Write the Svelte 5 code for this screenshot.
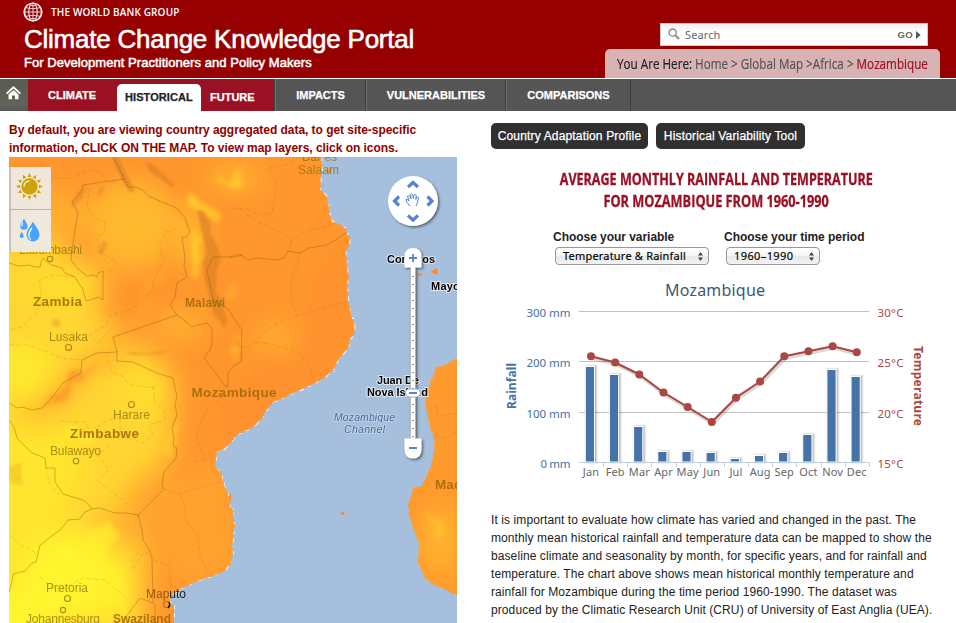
<script>
  const months = ['Jan', 'Feb', 'Mar', 'Apr', 'May', 'Jun', 'Jul', 'Aug', 'Sep', 'Oct', 'Nov', 'Dec'];
  const barTops = [367, 375, 427, 452, 452, 453, 459, 456, 453, 435, 370, 377];
  const temps = [356.3, 362.5, 374.5, 392.5, 407, 422, 397.7, 381.5, 356.3, 351.2, 346.3, 352.3];
  const step = 24.16;
  const points = temps.map((y, i) => [591 + i * step, y]);
  const line = points.map((p) => p.join(',')).join(' ');
  const grid = [
    { y: 311.5, mm: '300 mm', c: '30°C' },
    { y: 361.5, mm: '200 mm', c: '25°C' },
    { y: 412.5, mm: '100 mm', c: '20°C' },
    { y: 462.5, mm: '0 mm', c: '15°C' }
  ];
  const rays = Array.from({ length: 12 }, (_, i) => i * 30);
  const ticks = Array.from({ length: 22 }, (_, i) => 276.5 + i * 8);

  const coast =
    'L322,165 321,175 320,190 323,192 327,197 329,208 331,220 338,224 345,228 347,234 350,237 349,246 346,250 347,270 349,277 347,283 348,300 350,313 354,323 355,332 350,340 348,348 338,360 333,370 324,378 315,383 310,386 297,391 283,398 273,402 265,412 263,417 255,425 252,428 242,432 236,436 230,443 224,449 217,452 215,467 221,473 224,485 228,495 230,508 233,510 234,528 232,548 233,552 231,563 223,572 200,580 182,588 174,594 170,598 170,605 174,605 174,630';
  const africa = `M0,150 H320 ${coast} H0 Z`;
  const shore = `M320,150 ${coast}`;
  const madagascar =
    'M465,355 L457,358 448,363 443,366 435,367 433,377 428,388 425,392 426,408 430,428 434,438 435,445 432,463 427,475 422,485 414,488 408,505 412,525 417,538 419,543 418,563 425,578 433,585 443,588 453,594 465,594 Z';

  const borders = [
    '124,179 83,185 81,192 72,202 78,213 76,224 74,237 72,248 71,260 78,269 87,276 93,275 97,277 98,273 103,271 103,300 99,297 90,300 86,301 82,287 79,284 75,277 65,273 62,268 52,265 47,262 43,258 41,262 40,267 35,267 29,265 19,266 9,263',
    '113,157 118,166 128,187 135,187 143,190 148,196 153,198 162,202 177,208 185,218 190,232 186,237 182,237 183,245 185,257 184,266 187,277 177,283 175,297 170,305 177,315 184,320 192,327 198,325 207,323 212,328 212,343 210,350 204,358 214,371 226,387 228,383',
    '177,315 113,337 117,352 97,353 82,360 81,373 63,383 54,395 42,408 32,410 22,407 17,408 9,403',
    '117,352 117,361 133,362 150,370 157,373 173,378 175,388 177,396 175,405 177,415 172,428 174,438 173,446 177,448 176,458 164,472 162,485 164,489 138,515 125,513 115,513 100,508 92,509 86,502 83,500 63,494 55,482 55,468 46,468 45,458 32,453 17,438 14,427 9,420',
    '92,509 85,512 80,519 68,520 60,530 53,535 40,545 36,562 32,563 25,571 13,574 12,582 9,592',
    '138,515 142,530 143,540 150,551 152,558 153,603 140,598 125,618 122,623',
    '153,603 155,605 155,623',
    '230,257 240,254 248,260 257,258 277,260 284,258 288,251 300,253 309,248 327,245 337,239 347,232',
    '242,255 234,257 213,257 207,270 210,285 213,300 227,308 242,330 241,362 234,365 228,373 228,387'
  ];
  const provinces = [
    '40,163 55,178 72,178 90,170 101,172 105,180 118,184',
    '90,187 87,205 92,215 105,222 104,233 97,237 100,252 117,262 108,274',
    '177,229 165,232 160,245 161,255 166,258 156,275 152,290 140,302 130,310 110,315 106,325 90,335 98,343 109,331',
    '75,277 52,275 39,280 42,300 36,313 22,327 9,330',
    '9,345 28,345 48,352 60,358 82,360',
    '108,353 108,363 112,372 122,376 130,385 155,388',
    '232,208 248,209 257,215 272,213 275,196 276,180 268,168 288,164 299,157',
    '240,210 258,222 272,228 290,238 290,252',
    '290,242 307,231 320,228 337,223',
    '300,253 297,267 291,280 291,300 298,316 335,304 346,302',
    '298,316 280,322 267,330 256,342 247,348 240,346',
    '256,342 275,345 298,352 309,365 314,382',
    '228,388 219,388 219,400 207,410 198,430 197,440 206,460 192,462',
    '164,489 177,494 200,488 222,482',
    '180,495 186,507 184,517 198,537 200,555 208,575',
    '153,385 155,402 164,410 165,420 149,425 153,435 143,443 129,438 120,428 120,417 103,422 98,427',
    '110,445 98,455 109,470 98,481 112,492 125,502 138,515',
    '60,421 85,422 92,435',
    '46,468 50,485 60,495',
    '138,552 132,562 133,570 140,556 151,551',
    '153,560 170,566 170,585 180,590',
    '9,535 20,545 32,550 38,555',
    '40,577 58,592 83,578 105,580 125,597',
    '436,405 438,416 450,414 457,413',
    '432,436 445,438 457,432'
  ];
</script>

<div class="page">
  <header>
    <div class="brand">
      <div class="group">
        <svg width="20" height="20" viewBox="0 0 20 20" fill="none" stroke="#fff" stroke-width="1">
          <circle cx="10" cy="10" r="9" stroke-width="1.2" />
          <ellipse cx="10" cy="10" rx="4.2" ry="9" />
          <path d="M10 1V19M1 10H19M2.3 5.6Q10 8 17.7 5.6M2.3 14.4Q10 12 17.7 14.4M5.2 2.7Q10 4.7 14.8 2.7M5.2 17.3Q10 15.3 14.8 17.3M5 2.6Q-1.6 10 5 17.4M15 2.6Q21.6 10 15 17.4" stroke-width=".8" />
        </svg>
        <span>THE WORLD BANK GROUP</span>
      </div>
      <h1>Climate Change Knowledge Portal</h1>
      <p>For Development Practitioners and Policy Makers</p>
    </div>
    <div class="tools">
      <div class="search">
        <svg width="12" height="12" viewBox="0 0 12 12" fill="none" stroke="#888">
          <circle cx="4.6" cy="4.6" r="3.6" stroke-width="1.3" />
          <path d="M7.4 7.4L11 11" stroke-width="2" />
        </svg>
        <span class="ph">Search</span>
        <span class="go">GO</span>
        <svg width="5" height="8" viewBox="0 0 5 8"><path d="M0 0L4.6 4L0 8Z" fill="#555" /></svg>
      </div>
      <div class="crumbs"><span class="squeeze"><b>You Are Here:</b> Home &gt; Global Map &gt;Africa &gt; <em>Mozambique</em></span></div>
    </div>
  </header>

  <nav>
    <div class="home">
      <svg width="15" height="14" viewBox="0 0 15 14" fill="#fff">
        <path d="M7.5 0L15 7L13.8 8.2L7.5 2.4L1.2 8.2L0 7ZM7.5 3.9L12.5 8.5V13.2H9V9.5H6V13.2H2.5V8.5Z" />
      </svg>
    </div>
    <div class="climate">
      <span class="main">CLIMATE</span>
      <span class="active">HISTORICAL</span>
      <span class="future">FUTURE</span>
    </div>
    <span class="tab impacts">IMPACTS</span>
    <span class="tab vuln">VULNERABILITIES</span>
    <span class="tab comp">COMPARISONS</span>
  </nav>

  <main>
    <section class="left">
      <p class="notice">By default, you are viewing country aggregated data, to get site-specific<br />information, CLICK ON THE MAP. To view map layers, click on icons.</p>
      <svg class="map" width="448" height="466" viewBox="9 157 448 466">
        <defs>
          <clipPath id="land"><path d={africa} /><path d={madagascar} /></clipPath>
          <filter id="soft" x="-30%" y="-30%" width="160%" height="160%">
            <feGaussianBlur stdDeviation="13" />
          </filter>
          <filter id="mist" filterUnits="userSpaceOnUse" x="0" y="140" width="470" height="500">
            <feTurbulence type="fractalNoise" baseFrequency=".05" numOctaves="4" seed="8" result="n" />
            <feDisplacementMap in="SourceGraphic" in2="n" scale="22" xChannelSelector="R" yChannelSelector="G" />
            <feGaussianBlur stdDeviation="2.6" />
          </filter>
          <filter id="blot" x="-20%" y="-20%" width="140%" height="140%">
            <feGaussianBlur stdDeviation=".9" />
          </filter>
          <filter id="rough" filterUnits="userSpaceOnUse" x="0" y="140" width="480" height="500">
            <feTurbulence type="fractalNoise" baseFrequency=".25" numOctaves="2" seed="3" result="n" />
            <feDisplacementMap in="SourceGraphic" in2="n" scale="3" xChannelSelector="R" yChannelSelector="G" />
          </filter>
          <filter id="lift" x="-20%" y="-20%" width="150%" height="150%">
            <feDropShadow dx="1.5" dy="1.5" stdDeviation="1" flood-color="#333" flood-opacity=".65" />
          </filter>
        </defs>
        <rect x="9" y="157" width="448" height="466" fill="#a5bfdd" />
        <path d={shore} fill="none" stroke="#fff" stroke-width="1.8" stroke-dasharray="3 6 2 5 5 8" filter="url(#rough)" />
        <g filter="url(#rough)">
          <path d={africa} fill="#ff962d" />
          <path d={madagascar} fill="#ff9a2e" />
        </g>
        <g clip-path="url(#land)">
          <g filter="url(#soft)">
            <path d="M-20,235 L60,240 105,320 140,345 175,375 172,450 130,500 145,550 145,640 -20,640Z" fill="#ffd530" />
            <path d="M-20,410 L70,430 90,470 60,520 130,555 135,640 -20,640Z" fill="#ffe52e" />
            <ellipse cx="70" cy="575" rx="48" ry="38" fill="#fff52d" />
            <ellipse cx="20" cy="620" rx="35" ry="30" fill="#fff62d" />
            <ellipse cx="20" cy="370" rx="32" ry="28" fill="#ffea2d" />
            <ellipse cx="132" cy="225" rx="45" ry="45" fill="#ffb92e" />
            <ellipse cx="50" cy="215" rx="38" ry="26" fill="#ffae2f" />
            <ellipse cx="65" cy="285" rx="40" ry="25" fill="#ffdc2d" />
            <ellipse cx="145" cy="390" rx="20" ry="25" fill="#ffdf2d" />
            <ellipse cx="180" cy="325" rx="28" ry="14" fill="#ffb42e" />
            <ellipse cx="192" cy="238" rx="8" ry="35" fill="#ffcb2e" />
            <ellipse cx="235" cy="178" rx="32" ry="12" fill="#ffb42e" />
            <ellipse cx="278" cy="338" rx="24" ry="14" fill="#ffb02e" />
            <path d="M5,425 L35,408 95,350 130,335 125,355 85,375 60,405 40,420Z" fill="#ff9f2e" />
            <ellipse cx="150" cy="500" rx="24" ry="26" fill="#ffa42e" />
            <ellipse cx="118" cy="530" rx="18" ry="22" fill="#ffb22e" />
            <path d="M175,465 L230,470 240,570 180,590 155,560Z" fill="#ffa22e" />
            <ellipse cx="440" cy="540" rx="18" ry="34" fill="#ffb52e" />
            <path d="M350,220V340L300,390 250,430 230,460 225,400 300,340 330,260Z" fill="#ff912f" />
          </g>
          <g filter="url(#mist)" opacity=".65">
            <path d="M185,196L205,203 224,214 218,222 203,211 190,209Z" fill="#ffe02d" />
            <path d="M191,228L202,240 200,262 194,278 190,255Z" fill="#ffdf2d" />
            <path d="M246,175L238,186 222,184 214,180 226,178Z" fill="#ffd32d" />
            <path d="M40,412L55,393 72,377 100,362 78,382 57,406Z" fill="#f98e2c" />
            <path d="M116,340L140,305 160,260 178,225 165,275 145,325Z" fill="#ffa42e" />
            <path d="M230,348L238,335 242,338 238,358Z" fill="#ffc42d" />
            <path d="M83,535L106,525 118,535 108,560 130,585 118,610 88,578Z" fill="#fff02d" />
            <path d="M167,432L176,424 174,448 168,462Z" fill="#ffd22d" />
            <path d="M428,512L438,515 440,540 431,530Z" fill="#ffc52d" />
            <path d="M232,290L240,282 238,298Z" fill="#ffbb2d" />
            <path d="M60,436L95,428 90,440 62,444Z" fill="#fff02d" />
          </g>
          <g fill="#d98027" opacity=".62" filter="url(#blot)">
            <path d="M197,209L204,212 210,222 211,234 218,248 221,257 217,272 216,290 221,300 227,320 225,329 219,320 214,315 209,297 204,277 203,262 206,253 203,236 200,224Z" />
            <path d="M112,157H119L125,172 135,190 130,193 122,180 115,166Z" />
            <path d="M146,163L153,164 175,185 171,187 160,178 149,171Z" />
            <path d="M86,186L82,198 73,207 71,203 78,191Z" opacity=".7" />
            <path d="M101,186L106,188 100,196 96,195Z" opacity=".6" />
            <path d="M103,241L108,244 102,255 98,252Z" opacity=".7" />
            <path d="M53,319L60,320V327L52,326Z" opacity=".5" />
            <path d="M9,468L14,464 22,463 21,474 24,485 13,484 9,480Z" opacity=".35" />
            <path d="M125,352L147,353 168,350 160,354 133,355Z" opacity=".7" />
            <path d="M235,341L240,339V347L235,346Z" opacity=".6" />
          </g>
          <g fill="none" stroke="#985d0e" stroke-width=".9" stroke-linejoin="round">
            {#each borders as b}<polyline points={b} opacity=".48" />{/each}
            {#each provinces as p}<polyline points={p} opacity=".2" stroke-dasharray="5 2" />{/each}
          </g>
        </g>
        <g fill="#ff8a2c">
          <path d="M417,273L423,274 421,276 417,275ZM430,272L437,268 438,275ZM448,282L457,284V290L451,287ZM341,512H344V515H341ZM397,385H399V386H397Z" />
          <path d="M326,171L332,168 330,174ZM228,497L231,493V502ZM323,184H324V187H323Z" />
        </g>
        <g fill="none" stroke="#8a650f" stroke-width="1.1" opacity=".7">
          <circle cx="50" cy="259" r="2.7" /><circle cx="68.500" cy="347.500" r="3" />
          <circle cx="131.500" cy="404.500" r="3" /><circle cx="76" cy="461" r="2.8" />
          <circle cx="67.500" cy="598.500" r="3" /><circle cx="63" cy="610" r="2.6" />
          <circle cx="166.500" cy="604.500" r="3" />
        </g>
        <g class="city">
          <text x="19" y="254" textLength="63">Lubumbashi</text>
          <text x="49" y="341" textLength="39">Lusaka</text>
          <text x="113" y="419" textLength="37">Harare</text>
          <text x="50" y="455" textLength="51">Bulawayo</text>
          <text x="46" y="592" textLength="42">Pretoria</text>
          <text x="26" y="623" textLength="74">Johannesburg</text>
          <text x="302" y="161" textLength="35">Dar es</text>
          <text x="298" y="174" textLength="41">Salaam</text>
        </g>
        <text class="port" x="146" y="598" textLength="40"><tspan fill="#9a590c">Map</tspan><tspan fill="#222">uto</tspan></text>
        <path d="M169 602Q171 605 168 608" stroke="#111" fill="none" stroke-width="1.4" />
        <g class="land">
          <text x="33" y="306" font-size="13.500" textLength="49">Zambia</text>
          <text x="185" y="307" font-size="12" textLength="40">Malawi</text>
          <text x="191.500" y="397" font-size="13.500" textLength="85">Mozambique</text>
          <text x="70" y="438" font-size="13.500" textLength="69">Zimbabwe</text>
          <text x="113" y="623" font-size="12" textLength="58">Swaziland</text>
          <text x="435" y="489" font-size="13.500" textLength="79">Madagascar</text>
        </g>
        <g class="isle">
          <text x="387" y="263" textLength="48">Comoros</text>
          <text x="431" y="290" textLength="43">Mayotte</text>
          <text x="377" y="384" textLength="42">Juan De</text>
          <text x="367" y="396" textLength="61">Nova Island</text>
        </g>
        <g class="sea">
          <text x="334" y="421" textLength="61">Mozambique</text>
          <text x="344" y="433" textLength="41">Channel</text>
        </g>

        <g class="layers">
          <rect x="9" y="167" width="42" height="42" fill="#efedeb" fill-opacity=".92" />
          <rect x="9" y="210" width="42" height="42" fill="#efedeb" fill-opacity=".92" />
          <rect x="9" y="167" width="2" height="85" fill="#b5a99c" opacity=".6" />
          <g transform="translate(29.500 186.500)" fill="#cda20a">
            <circle r="8.200" />
            {#each rays as r}<path d="M-1.800 -9.500L0 -13.500L1.800 -9.500Z" transform="rotate({r})" />{/each}
            <path d="M-5.500 0A5.500 5.500 0 0 1 0 -5.500" fill="none" stroke="#f3edcf" stroke-width="1.400" />
          </g>
          <g fill="#47a4fb">
            <path d="M33 221.500C35 226 39.500 230 39.500 235A6.500 6.500 0 0 1 26.500 235C26.500 230 31 226 33 221.500Z" />
            <path d="M24 218.500C25 221.500 27.600 223.500 27.600 226A3.700 3.700 0 0 1 20.200 226C20.200 223.500 23 221.500 24 218.500Z" />
            <path d="M21.700 231.500C22.200 233 23.700 234.500 23.700 236A2 2 0 0 1 19.700 236C19.700 234.500 21.200 233 21.700 231.500Z" />
            <path d="M32 228Q28.500 232 28.800 236Q29 238.500 31 239.500M22.800 222.500Q21.500 224.500 22 226.500" stroke="#fff" stroke-width="1.200" fill="none" />
          </g>
        </g>

        <g filter="url(#lift)">
          <circle cx="413" cy="201" r="25" fill="#fff" />
          <rect x="410.500" y="266" width="5" height="176" fill="#fff" stroke="#aaa" stroke-width=".6" />
          <path d="M404.500 267.500V256.500Q404.500 248 413 248Q421.500 248 421.500 256.500V267.500Z" fill="#fff" />
          <path d="M404.500 438.500V449Q404.500 458.500 413 458.500Q421.500 458.500 421.500 449V438.500Z" fill="#fff" />
        </g>
        <g stroke="#999" stroke-width="1">{#each ticks as t}{#if t < 437}<path d="M412 {t}H414" />{/if}{/each}</g>
        <rect x="405.500" y="389" width="15" height="8" rx="4" fill="#fff" stroke="#aaa" />
        <g stroke="#5a83ce" fill="none">
          <path d="M409 393H417M409 448H417M409 258H417M413 254V262" stroke-width="1.800" />
          <path d="M408 187L413 182.500L418 187M408 215.500L413 220L418 215.500M399 196.500L394.500 201L399 205.500M427.500 196.500L432 201L427.500 205.500" stroke-width="3.200" />
          <path d="M410 206Q406 202 406 199.500Q407.500 198.500 409 201L407.500 196Q408.500 194.500 409.700 196L411 199L410.500 194.500Q411.500 193 412.700 194.500L413.300 198.500L414 194.800Q415.300 193.500 416.200 195.500L415.800 199.500L417.300 197Q418.800 196.700 418.500 198.500L417 203.500L416 206" stroke-width="1" />
        </g>
      </svg>
    </section>

    <section class="right">
      <div class="buttons"><span class="b1">Country Adaptation Profile</span><span class="b2">Historical Variability Tool</span></div>
      <h2><span class="h2a">AVERAGE MONTHLY RAINFALL AND TEMPERATURE</span><br /><span class="h2b">FOR MOZAMBIQUE FROM 1960-1990</span></h2>
      <div class="form">
        <div class="field f1">
          <b>Choose your variable</b>
          <div class="select s1"><span>Temperature &amp; Rainfall</span><svg width="5" height="9" viewBox="0 0 5 9"><path d="M0 3.500L2.500 0L5 3.500ZM0 5.500L2.500 9L5 5.500Z" fill="#444" /></svg></div>
        </div>
        <div class="field">
          <b>Choose your time period</b>
          <div class="select s2"><span>1960–1990</span><svg width="5" height="9" viewBox="0 0 5 9"><path d="M0 3.500L2.500 0L5 3.500ZM0 5.500L2.500 9L5 5.500Z" fill="#444" /></svg></div>
        </div>
      </div>
      <svg class="chart" width="450" height="215" viewBox="491 275 450 215">
        <text x="665" y="295.500" font-size="16" fill="#3e576f" textLength="100">Mozambique</text>
        {#each grid as g, i}
          {#if i < 3}<path d="M579 {g.y}H869" stroke="#c0c0c0" />{/if}
          <text x={i === 3 ? 540.5 : 526.5} y={g.y + 5.5} font-size="11.500" fill="#4572a7" textLength={i === 3 ? 30 : 44}>{g.mm}</text>
          <text x="877.500" y={g.y + 5.5} font-size="11.500" fill="#aa4643" textLength="26">{g.c}</text>
        {/each}
        {#each barTops as y, i}
          {@const x = 585.8 + i * step}
          <g fill="none" stroke="#000">
            <rect x={x + 1} y={y} width="8.700" height={461.5 - y} stroke-width="5" stroke-opacity=".05" />
            <rect x={x + 1} y={y} width="8.700" height={461.5 - y} stroke-width="3" stroke-opacity=".1" />
            <rect x={x + 1} y={y} width="8.700" height={461.5 - y} stroke-width="1" stroke-opacity=".15" />
          </g>
          <rect x={x - 0.5} y={y - 0.5} width="9.200" height={462.5 - y} fill="#4572a7" stroke="#fff" />
        {/each}
        <path d="M579 462.500H869.500" stroke="#c0d0e0" />
        {#each months as m, i}
          <path d="M{Math.round(579 + (i + 1) * step) + 0.5} 463V467" stroke="#c0d0e0" />
          <text x={591 + i * step} y="476" font-size="11" fill="#666" text-anchor="middle" letter-spacing=".1">{m}</text>
        {/each}
        <polyline points={line} transform="translate(1 1.500)" fill="none" stroke="#000" stroke-opacity=".15" stroke-width="4" />
        <polyline points={line} fill="none" stroke="#aa4643" stroke-width="2" stroke-linejoin="round" />
        {#each points as [x, y]}<circle cx={x} cy={y} r="4" fill="#aa4643" />{/each}
        <text transform="translate(516 409) rotate(-90)" font-size="12" font-weight="bold" fill="#4572a7" textLength="46">Rainfall</text>
        <text transform="translate(913.500 346) rotate(90)" font-size="12" font-weight="bold" fill="#aa4643" textLength="80">Temperature</text>
      </svg>
      <p class="copy">It is important to evaluate how climate has varied and changed in the past. The<br />monthly mean historical rainfall and temperature data can be mapped to show the<br />baseline climate and seasonality by month, for specific years, and for rainfall and<br />temperature. The chart above shows mean historical monthly temperature and<br />rainfall for Mozambique during the time period 1960-1990. The dataset was<br />produced by the Climatic Research Unit (CRU) of University of East Anglia (UEA).</p>
    </section>
  </main>
</div>

<style>
  .page { width: 956px; height: 623px; overflow: hidden; background: #fff; font-family: 'Liberation Sans', sans-serif; }
  .page * { box-sizing: border-box; }
  h1, h2, p { margin: 0; }
  svg { flex: none; }
  span, b { white-space: nowrap; }
  header { height: 78px; background: #960000; display: flex; justify-content: space-between; }
  .brand { padding: 2px 0 0 23px; color: #fff; }
  .group { display: flex; align-items: center; gap: 8px; height: 20px; }
  .group span { font: 600 10px 'Open Sans', sans-serif; letter-spacing: .15px; }
  h1 { font-size: 26px; line-height: 30px; font-weight: 400; margin: 2px 0 0 1px; letter-spacing: -.24px; -webkit-text-stroke: .6px #fff; white-space: nowrap; }
  .brand p { font-size: 13px; line-height: 16px; margin: 1px 0 0 1px; letter-spacing: .05px; -webkit-text-stroke: .5px #fff; white-space: nowrap; }
  .tools { width: 335px; margin-right: 16px; padding-top: 23px; }
  .search { width: 268px; height: 23px; margin-left: 55px; display: flex; align-items: center; background: linear-gradient(#eee, #fff 40%); border: 1px solid #ccc; padding: 0 6px 0 7px; }
  .search svg:first-child { margin-top: -2px; }
  .ph { flex: 1; margin-left: 5px; font: 11px 'Noto Sans', sans-serif; letter-spacing: .1px; color: #666; }
  .go { font-size: 9.5px; font-weight: 700; color: #666; letter-spacing: .3px; margin-right: 3px; }
  .crumbs { height: 29px; margin-top: 3px; background: #d9b3b3; border-radius: 5px 5px 0 0; padding: 5px 0 0 12px; font: 14px/20px 'Open Sans', sans-serif; color: #555; }
  .squeeze { display: inline-block; transform-origin: 0 50%; transform: scaleX(.834); -webkit-text-stroke: .2px; }
  .crumbs b { font-weight: 400; color: #222; }
  .crumbs em { font-style: normal; color: #9b1024; }

  nav { height: 32px; margin-top: 1px; background: #555; display: flex; color: #fff; font-size: 11px; font-weight: 700; line-height: 32px; -webkit-text-stroke: .25px; }
  .home { width: 28px; background: linear-gradient(#585b4f, #606557 80%, #555); padding: 7px 0 0 6px; line-height: 0; }
  .climate { width: 247px; background: #9b1124; display: flex; border-right: 1px solid #444; }
  .main { width: 89px; padding-left: 20px; }
  .active { width: 84px; margin-top: 5px; background: #fff; color: #222; border-radius: 5px 5px 0 0; line-height: 27px; padding-left: 8px; letter-spacing: .08px; }
  .future { padding: 2px 0 0 9px; }
  .tab { border-left: 1px solid #707070; border-right: 1px solid #3d3d3d; text-align: center; }
  .impacts { width: 91px; }
  .vuln { width: 140px; }
  .comp { width: 125px; }

  main { display: flex; }
  .left { width: 491px; padding: 10px 0 0 9px; }
  .notice { font-size: 12px; line-height: 18px; font-weight: 700; color: #900000; white-space: nowrap; letter-spacing: -.04px; }
  .map { display: block; }
  .map text { font-family: 'Liberation Sans', sans-serif; }
  .city text { font-size: 12px; fill: #8f720e; fill-opacity: .75; }
  .port { font-size: 12px; }
  .land text { font-weight: 700; fill: #a36b0b; fill-opacity: .9; }
  .isle text { font-size: 11px; font-weight: 700; fill: #000; stroke: #dfe8f2; stroke-width: 2px; paint-order: stroke; }
  .sea text { font-size: 10.5px; font-style: italic; fill: #49699b; stroke: #c4d4e8; stroke-width: 1.5px; paint-order: stroke; }

  .right { width: 450px; padding-top: 12px; }
  .buttons { display: flex; gap: 8px; height: 26px; }
  .buttons span { background: #303030; color: #fff; border-radius: 5px; font-size: 12px; line-height: 26px; text-align: center; letter-spacing: .16px; -webkit-text-stroke: .25px #fff; }
  .b1 { width: 157px; }
  .b2 { width: 149px; }
  h2 { margin-top: 19px; height: 45px; text-align: center; font: 700 15.5px/22px 'Open Sans', sans-serif; color: #9b1024; -webkit-text-stroke: .3px; }
  h2 span { display: inline-block; margin: 0 -60px; }
  .h2a { transform: scaleX(.81); }
  .h2b { transform: scaleX(.822); }
  .form { display: flex; margin: 14px 0 0 62px; height: 48px; }
  .field b { display: block; font-size: 12px; line-height: 16px; color: #222; margin-top: 2px; letter-spacing: -.04px; }
  .f1 { width: 171px; }
  .select { height: 18px; margin: 2px 0 0 2px; border: 1px solid #989898; border-radius: 4px; background: linear-gradient(#fff, #f3f3f3 50%, #e8e8e8 52%, #f3f3f3); display: flex; align-items: center; justify-content: space-between; padding: 0 5px 0 7px; font: 11px/16px 'Noto Sans', sans-serif; color: #000; -webkit-text-stroke: .15px; }
  .s1 { width: 154px; letter-spacing: .2px; }
  .s2 { width: 94px; letter-spacing: .4px; }
  .chart { display: block; margin-top: 0; }
  .chart text { font-family: 'Noto Sans', sans-serif; }
  .copy { margin-top: 21px; font-size: 12px; line-height: 18px; color: #222; white-space: nowrap; letter-spacing: .09px; }
</style>
